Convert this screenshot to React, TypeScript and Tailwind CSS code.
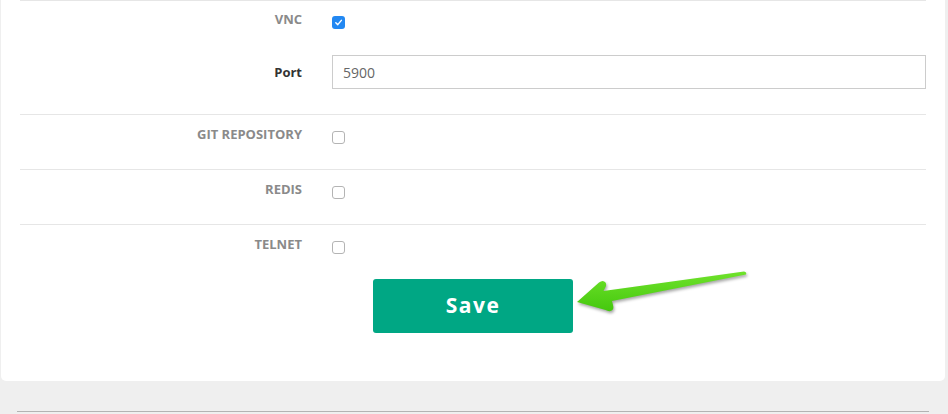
import React from "react";

const font = { fontFamily: '"Open Sans", "Noto Sans", sans-serif' };

function Box({ checked }: { checked?: boolean }) {
  return checked ? (
    <span className="ml-[30px] mt-[7px] flex h-[13px] w-[13px] shrink-0 items-center justify-center rounded-[3px] bg-[#2288f2]">
      <svg width="9" height="9" viewBox="0 0 10 10">
        <path d="M2 5.2 L4.2 7.4 L8.2 2.6" fill="none" stroke="#fff" strokeWidth="1.6" strokeLinecap="round" strokeLinejoin="round" />
      </svg>
    </span>
  ) : (
    <span className="ml-[30px] mt-[7px] block h-[13px] w-[13px] shrink-0 rounded-[3px] border border-[#b4b4b4] bg-white" />
  );
}

function CheckRow({ label }: { label: string }) {
  return (
    <div className="flex h-[55px] items-start border-t border-[#e6e6e6] pt-[9px]">
      <div className="w-[282px] text-right text-[13px] font-bold uppercase leading-[20px] text-[#8a8a8a]">{label}</div>
      <Box />
    </div>
  );
}

export default function App() {
  return (
    <div className="relative h-[414px] w-[948px] overflow-hidden bg-[#efefef]" style={font}>
      <div className="ml-[1px] h-[381px] w-[944px] rounded-b-[5px] bg-white px-[19px]">
        <div className="h-[114px] border-t border-[#e6e6e6] pt-[8px]">
          <div className="flex items-start">
            <div className="w-[282px] text-right text-[13px] font-bold leading-[20px] text-[#8a8a8a]">VNC</div>
            <Box checked />
          </div>
          <div className="mt-[26px] flex items-center">
            <div className="w-[282px] text-right text-[13px] font-bold leading-[20px] text-[#333]">Port</div>
            <div className="ml-[30px] flex h-[34px] w-[594px] items-center border border-[#cccccc] bg-white pl-[10px] text-[14px] text-[#666]">
              5900
            </div>
          </div>
        </div>
        <CheckRow label="Git Repository" />
        <CheckRow label="Redis" />
        <CheckRow label="Telnet" />
        <div className="flex justify-center">
          <button className="flex h-[54px] w-[200px] items-center justify-center rounded-[3px] bg-[#00a784] text-[21px] font-bold tracking-[1.5px] text-white">
            Save
          </button>
        </div>
      </div>
      <div className="mx-[17px] mt-[30px] h-[1px] w-[912px] bg-[#b3b3b3]" />
      <svg
        className="absolute left-[560px] top-[260px]"
        width="200"
        height="70"
        viewBox="0 0 200 70"
        style={{ filter: "drop-shadow(1.5px 2px 1.5px rgba(0,0,0,0.35))" }}
      >
        <defs>
          <linearGradient id="ag" x1="0" y1="0" x2="0" y2="1">
            <stop offset="0" stopColor="#6fe22b" />
            <stop offset="1" stopColor="#45c80e" />
          </linearGradient>
        </defs>
        <path
          d="M17 42 L39 22.5 Q43 19.5 45.5 22.5 Q47 25 45 28 L43.5 31 L184 11.5 Q187 12 186 14.5 L52 41 L53 45 Q54.5 50 50.5 51 Q48 51.5 45.5 50 Z"
          fill="url(#ag)"
        />
      </svg>
    </div>
  );
}
